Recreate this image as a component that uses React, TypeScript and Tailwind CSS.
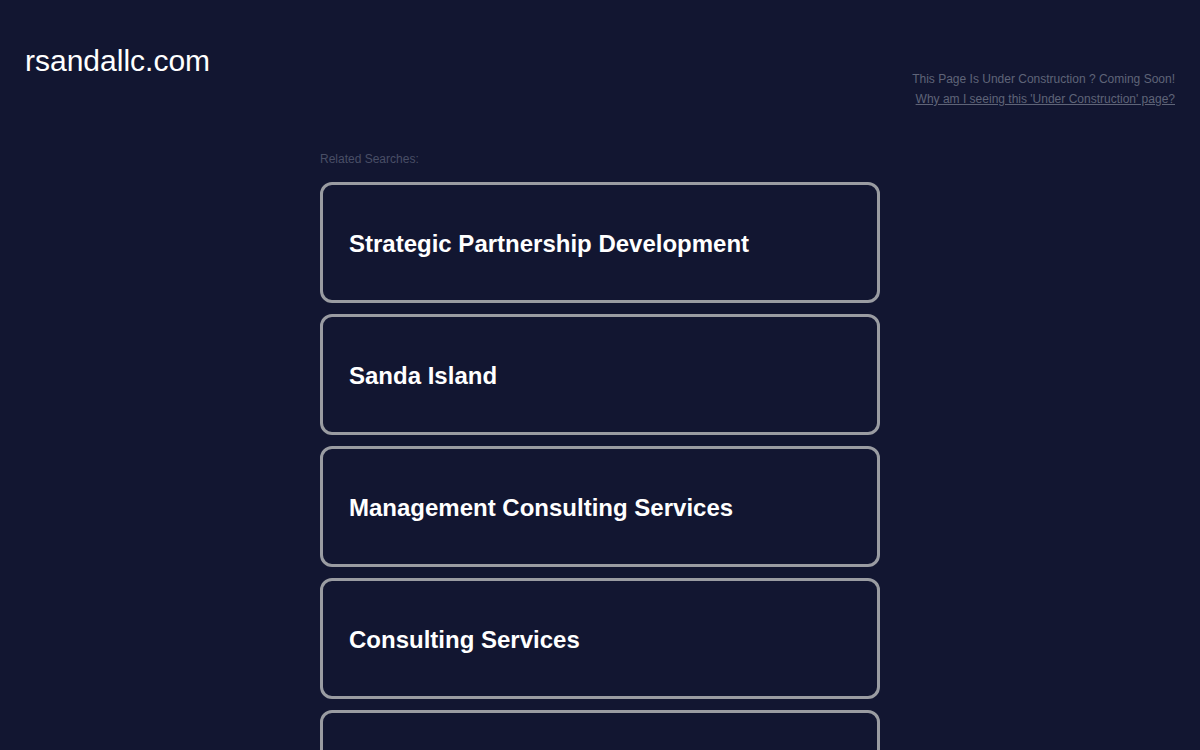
const searches = [
  'Strategic Partnership Development',
  'Sanda Island',
  'Management Consulting Services',
  'Consulting Services',
  'Business Consulting',
]

export default function App() {
  return (
    <div className="h-[750px] overflow-hidden bg-[#121631] font-['Liberation_Sans',Arial,sans-serif]">
      <div className="flex justify-between px-[25px] pt-[43px]">
        <div className="text-[30px] leading-[36px] text-white">rsandallc.com</div>
        <div className="pt-[26px] text-right text-[12px] leading-[20px] text-[#5f6478]">
          <p>This Page Is Under Construction ? Coming Soon!</p>
          <a href="#" className="underline">Why am I seeing this 'Under Construction' page?</a>
        </div>
      </div>

      <div className="mx-auto mt-[43px] w-[560px]">
        <p className="mb-[16px] text-[12px] leading-[14px] text-[#494e66]">Related Searches:</p>
        <div className="flex flex-col gap-[11px]">
          {searches.map(s => (
            <a
              key={s}
              href="#"
              className="flex h-[121px] items-center rounded-[12px] border-[3px] border-[#9a9ca2] px-[26px] pt-[2px] text-[24px] font-bold text-white"
            >
              {s}
            </a>
          ))}
        </div>
      </div>
    </div>
  )
}
